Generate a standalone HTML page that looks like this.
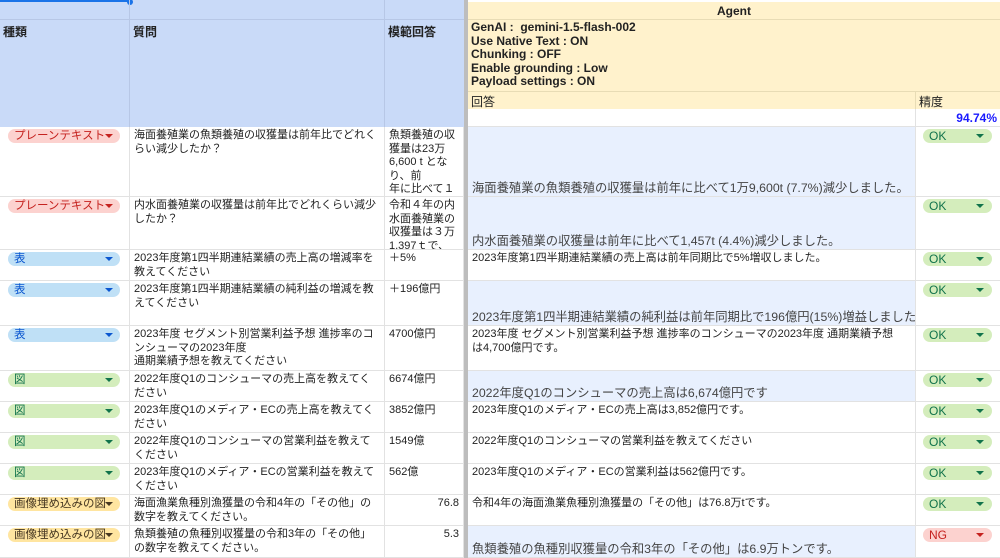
<!DOCTYPE html><html><head><meta charset="utf-8"><style>
*{margin:0;padding:0;box-sizing:border-box}
body{width:1000px;height:558px;overflow:hidden;background:#fff;font-family:"Liberation Sans","Noto Sans CJK JP",sans-serif;font-size:11px;color:#222;position:relative}
.a{position:absolute;overflow:hidden}
.hd{font-size:12px;font-weight:bold}
.c{position:absolute;overflow:hidden;border-right:1px solid #e2e2e2;border-bottom:1px solid #e2e2e2;padding:2px 4px;line-height:13.5px}
.chip{position:absolute;height:14px;border-radius:7px;font-size:11.5px;line-height:14px;padding-left:6px;white-space:nowrap}
.chip:after{content:"";position:absolute;right:7px;top:5px;border-left:4px solid transparent;border-right:4px solid transparent;border-top:4px solid currentColor}
.r{background:#fcd2cf;color:#c5221f}.b{background:#bfe0f6;color:#0b57d0}.g{background:#d4edbc;color:#11734b}.y{background:#ffe5a0;color:#473822}
.ok{background:#d4edbc;color:#11734b;left:923px;width:69px;height:14px;border-radius:7px;position:absolute;font-size:12px;line-height:14px;padding-left:6px}
.ok:after{content:"";position:absolute;right:8px;top:5px;border-left:4px solid transparent;border-right:4px solid transparent;border-top:4px solid currentColor}
.ng{background:#fcd2cf;color:#c5221f}
.bl{background:#e8f0fe;color:#444;font-size:12.3px;display:flex;align-items:flex-end;white-space:nowrap;padding-bottom:1px}
</style></head><body>
<div class="a" style="left:0;top:0;width:464px;height:127px;background:#c9daf8"></div>
<div class="a" style="left:0;top:0;width:130px;height:2px;background:#1a73e8"></div>
<div class="a" style="left:127px;top:-1px;width:6px;height:6px;border-radius:3px;background:#1a73e8"></div>
<div class="a" style="left:0;top:19px;width:464px;height:1px;background:#b7c7e6"></div>
<div class="a" style="left:129px;top:0;width:1px;height:127px;background:#b7c7e6"></div>
<div class="a" style="left:384px;top:0;width:1px;height:127px;background:#b7c7e6"></div>
<div class="a hd" style="left:3px;top:23px">種類</div>
<div class="a hd" style="left:133px;top:23px">質問</div>
<div class="a hd" style="left:388px;top:23px">模範回答</div>
<div class="a" style="left:464px;top:0;width:4px;height:558px;background:#bdbdbd"></div>
<div class="a" style="left:468px;top:2px;width:532px;height:107px;background:#fff2cc"></div>
<div class="a hd" style="left:468px;top:2px;width:532px;height:18px;text-align:center;line-height:18px;border-bottom:1px solid #e8dcb5">Agent</div>
<div class="a hd" style="left:471px;top:21px;line-height:13.5px">GenAI :&nbsp; gemini-1.5-flash-002<br>Use Native Text : ON<br>Chunking : OFF<br>Enable grounding : Low<br>Payload settings : ON</div>
<div class="a" style="left:468px;top:91px;width:532px;height:1px;background:#e8dcb5"></div>
<div class="a" style="left:471px;top:93px;font-size:12px">回答</div>
<div class="a" style="left:915px;top:91px;width:1px;height:36px;background:#e8dcb5"></div>
<div class="a" style="left:919px;top:93px;font-size:12px">精度</div>
<div class="a" style="left:468px;top:109px;width:532px;height:18px;background:#fff;border-bottom:1px solid #e2e2e2"></div>
<div class="a" style="left:915px;top:109px;width:1px;height:18px;background:#e2e2e2"></div>
<div class="a hd" style="right:3px;top:111px;color:#1a1aff">94.74%</div>
<div id="rows"></div>
<script>
var R=[
[127,197,'r','プレーンテキスト',112,'海面養殖業の魚類養殖の収獲量は前年比でどれくらい減少したか？','魚類養殖の収獲量は23万<br>6,600 t とな<br>り、前<br>年に比べて１',0,'海面養殖業の魚類養殖の収獲量は前年に比べて1万9,600t (7.7%)減少しました。',1,0],
[197,250,'r','プレーンテキスト',112,'内水面養殖業の収獲量は前年比でどれくらい減少したか？','令和４年の内<br>水面養殖業の<br>収獲量は３万<br>1,397ｔで、ま',0,'内水面養殖業の収獲量は前年に比べて1,457t (4.4%)減少しました。',1,0],
[250,281,'b','表',112,'2023年度第1四半期連結業績の売上高の増減率を教えてください','＋5%',0,'2023年度第1四半期連結業績の売上高は前年同期比で5%増収しました。',0,0],
[281,326,'b','表',112,'2023年度第1四半期連結業績の純利益の増減を教えてください','＋196億円',0,'2023年度第1四半期連結業績の純利益は前年同期比で196億円(15%)増益しました',1,0],
[326,371,'b','表',112,'2023年度 セグメント別営業利益予想 進捗率のコンシューマの2023年度<br>通期業績予想を教えてください','4700億円',0,'2023年度 セグメント別営業利益予想 進捗率のコンシューマの2023年度 通期業績予想<br>は4,700億円です。',0,0],
[371,402,'g','図',112,'2022年度Q1のコンシューマの売上高を教えてください','6674億円',0,'2022年度Q1のコンシューマの売上高は6,674億円です',1,0],
[402,433,'g','図',112,'2023年度Q1のメディア・ECの売上高を教えてください','3852億円',0,'2023年度Q1のメディア・ECの売上高は3,852億円です。',0,0],
[433,464,'g','図',112,'2022年度Q1のコンシューマの営業利益を教えてください','1549億',0,'2022年度Q1のコンシューマの営業利益を教えてください',0,0],
[464,495,'g','図',112,'2023年度Q1のメディア・ECの営業利益を教えてください','562億',0,'2023年度Q1のメディア・ECの営業利益は562億円です。',0,0],
[495,526,'y','画像埋め込みの図',112,'海面漁業魚種別漁獲量の令和4年の「その他」の数字を教えてください。','76.8',1,'令和4年の海面漁業魚種別漁獲量の「その他」は76.8万tです。',0,0],
[526,558,'y','画像埋め込みの図',112,'魚類養殖の魚種別収獲量の令和3年の「その他」の数字を教えてください。','5.3',1,'魚類養殖の魚種別収獲量の令和3年の「その他」は6.9万トンです。',1,1]];
var h='';
R.forEach(function(r){var t=r[0],hh=r[1]-r[0];
h+='<div class="c" style="left:0;top:'+t+'px;width:130px;height:'+hh+'px"></div>';
h+='<div class="chip '+r[2]+'" style="left:8px;top:'+(t+2)+'px;width:'+r[4]+'px">'+r[3]+'</div>';
h+='<div class="c" style="left:130px;top:'+t+'px;width:255px;height:'+hh+'px">'+r[5]+'</div>';
h+='<div class="c" style="left:385px;top:'+t+'px;width:79px;height:'+hh+'px;'+(r[7]?'text-align:right':'')+'">'+r[6]+'</div>';
h+='<div class="c'+(r[9]?' bl':'')+'" style="left:468px;top:'+t+'px;width:448px;height:'+hh+'px">'+(r[9]?'<span>'+r[8]+'</span>':r[8])+'</div>';
h+='<div class="c" style="left:916px;top:'+t+'px;width:84px;height:'+hh+'px;border-right:none"></div>';
h+='<div class="ok'+(r[10]?' ng':'')+'" style="top:'+(t+2)+'px">'+(r[10]?'NG':'OK')+'</div>';});
document.getElementById('rows').innerHTML=h;
</script>
</body></html>
